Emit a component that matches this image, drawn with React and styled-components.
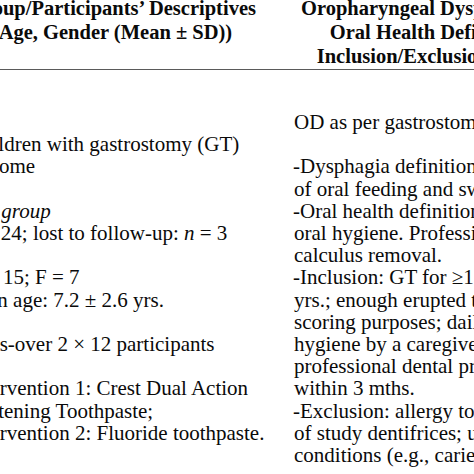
import styled, { createGlobalStyle } from 'styled-components'

const GlobalStyle = createGlobalStyle`
  html, body {
    margin: 0;
    padding: 0;
    background: #ffffff;
  }
`

const Frame = styled.div`
  width: 474px;
  height: 474px;
  overflow: hidden;
  background: #ffffff;
  color: #0a0a0a;
  font-family: 'Liberation Serif', 'Times New Roman', serif;
`

const Table = styled.div`
  width: 626px;
  margin-left: -32px;
  margin-top: -4px;
`

const Row = styled.div`
  display: grid;
  grid-template-columns: 300px 300px;
  column-gap: 26px;
  align-items: start;
`

const HeadRow = styled(Row)`
  border-bottom: 1.5px solid #5a5a5a;
  padding-bottom: 1px;
`

const HeadCell = styled.div`
  font-weight: bold;
  font-size: 20.5px;
  line-height: 24px;
  text-align: center;
  white-space: nowrap;
  padding-right: ${(p) => p.$trim || 0}px;
`

const BodyRow = styled(Row)`
  padding-top: 41px;
`

const Cell = styled.div`
  font-size: 21px;
  line-height: 22.2px;
  white-space: nowrap;
  padding-top: ${(p) => p.$top || 0}px;
`

const Para = styled.div`
  margin-bottom: 22.2px;
  &:last-child {
    margin-bottom: 0;
  }
`

const Line = styled.div`
  margin-left: ${(p) => p.$shift || 0}px;
`

const Em = styled.i``

// each line: [shift, content]
const leftParas = [
  [
    [0, 'Children with gastrostomy (GT)'],
    [0, 'at home'],
  ],
  [
    [-5, <Em key="g">Test group</Em>],
    [0, [<Em key="n">n</Em>, ' = 24; lost to follow-up: ', <Em key="m">n</Em>, ' = 3']],
  ],
  [
    [-6, 'M = 15; F = 7'],
    [-8, 'Mean age: 7.2 \u00b1 2.6 yrs.'],
  ],
  [[-8, 'Cross-over 2 \u00d7 12 participants']],
  [
    [-1, 'Intervention 1: Crest Dual Action'],
    [-6, 'Whitening Toothpaste;'],
    [-1, 'Intervention 2: Fluoride toothpaste.'],
  ],
]

const rightParas = [
  [[0, 'OD as per gastrostomy placement']],
  [
    [-1, '-Dysphagia definition: inability'],
    [0, 'of oral feeding and swallowing'],
    [-1, '-Oral health definition: poor'],
    [0, 'oral hygiene. Professional plaque,'],
    [0, 'calculus removal.'],
    [-1, '-Inclusion: GT for \u22651 year; 3\u201312'],
    [0, 'yrs.; enough erupted teeth for'],
    [0, 'scoring purposes; daily oral'],
    [0, 'hygiene by a caregiver; no'],
    [0, 'professional dental prophylaxis'],
    [0, 'within 3 mths.'],
    [-1, '-Exclusion: allergy to ingredients'],
    [0, 'of study dentifrices; uncontrolled'],
    [0, 'conditions (e.g., caries,'],
  ],
]

function Column({ paras, top }) {
  return (
    <Cell $top={top}>
      {paras.map((lines, i) => (
        <Para key={i}>
          {lines.map(([shift, content], j) => (
            <Line key={j} $shift={shift}>
              {content}
            </Line>
          ))}
        </Para>
      ))}
    </Cell>
  )
}

export default function App() {
  return (
    <Frame>
      <GlobalStyle />
      <Table>
        <HeadRow>
          <HeadCell $trim={12}>
            Group/Participants’ Descriptives
            <br />
            (Age, Gender (Mean ± SD))
          </HeadCell>
          <HeadCell>
            Oropharyngeal Dysphagia (OD),
            <br />
            Oral Health Definitions &amp;
            <br />
            Inclusion/Exclusion Criteria:
          </HeadCell>
        </HeadRow>
        <BodyRow>
          <Column paras={leftParas} top={22.2} />
          <Column paras={rightParas} top={0} />
        </BodyRow>
      </Table>
    </Frame>
  )
}
